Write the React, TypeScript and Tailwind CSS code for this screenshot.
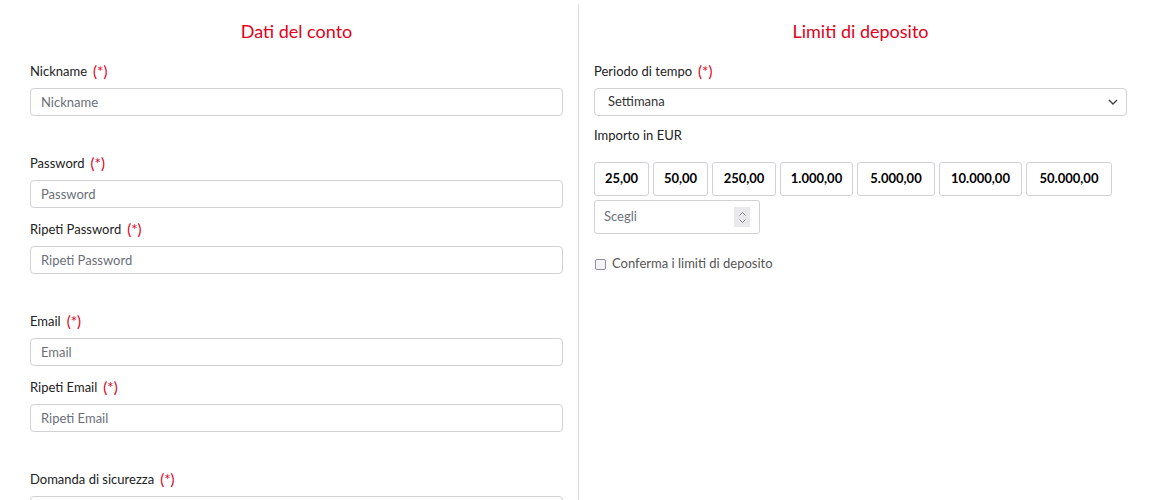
import React from 'react';

const amounts = [
  { v: '25,00', w: 'w-[55px]' },
  { v: '50,00', w: 'w-[55px]' },
  { v: '250,00', w: 'w-[64px]' },
  { v: '1.000,00', w: 'w-[73px]' },
  { v: '5.000,00', w: 'w-[78px]' },
  { v: '10.000,00', w: 'w-[83px]' },
  { v: '50.000,00', w: 'w-[86px]' },
];

function Req() {
  return <span className="ml-[6px] text-[15px] text-[#e2001a]">(*)</span>;
}

function Field({ label, placeholder, gap }: { label: string; placeholder: string; gap: string }) {
  return (
    <div className={gap}>
      <label className="flex h-5 items-center leading-5 text-[13px] text-[#222] mb-[7px]">
        {label}
        <Req />
      </label>
      <input
        placeholder={placeholder}
        className="block h-[28px] w-full rounded-[4px] border border-[#d2d2d6] px-[10px] text-[13px] text-[#333] placeholder:text-[#6b6f78] outline-none"
      />
    </div>
  );
}

export default function App() {
  return (
    <div className="flex min-h-[500px] bg-white pt-1 font-['Lato',sans-serif]">
      {/* Left: account data */}
      <div className="w-[579px] shrink-0 border-r border-[#dcdcdc] pl-[30px] pr-[15px]">
        <h2 className="mt-[15px] mb-[18px] h-6 text-center text-[18px] leading-6 text-[#e2001a]">Dati del conto</h2>
        <Field label="Nickname" placeholder="Nickname" gap="mb-[37px]" />
        <Field label="Password" placeholder="Password" gap="mb-[11px]" />
        <Field label="Ripeti Password" placeholder="Ripeti Password" gap="mb-[37px]" />
        <Field label="Email" placeholder="Email" gap="mb-[11px]" />
        <Field label="Ripeti Email" placeholder="Ripeti Email" gap="mb-[37px]" />
        <Field label="Domanda di sicurezza" placeholder="" gap="mb-0" />
      </div>

      {/* Right: deposit limits */}
      <div className="flex-1 pl-[15px] pr-[36px]">
        <h2 className="mt-[15px] mb-[18px] h-6 text-center text-[18px] leading-6 text-[#e2001a]">Limiti di deposito</h2>
        <label className="flex h-5 items-center leading-5 text-[13px] text-[#222] mb-[7px]">
          Periodo di tempo
          <Req />
        </label>
        <div className="flex h-[28px] items-center justify-between rounded-[4px] border border-[#d2d2d6] pl-[13px] pr-[8px] text-[13px] text-[#333]">
          <span>Settimana</span>
          <svg width="10" height="6" viewBox="0 0 10 6" fill="none" stroke="#444" strokeWidth="1.4">
            <path d="M1 1l4 4 4-4" />
          </svg>
        </div>
        <div className="mt-[9px] mb-[17px] h-5 leading-5 text-[13px] text-[#222]">Importo in EUR</div>
        <div className="flex flex-wrap gap-x-[4px] gap-y-[4px]">
          {amounts.map((a) => (
            <button
              key={a.v}
              className={`${a.w} h-[34px] rounded-[3px] border border-[#d2d2d6] text-center text-[13px] font-bold text-black`}
            >
              {a.v}
            </button>
          ))}
        </div>
        <div className="mt-[4px] flex h-[34px] w-[166px] items-center justify-between rounded-[3px] border border-[#d2d2d6] pl-[9px] pr-[9px]">
          <span className="text-[13px] text-[#6b6f78]">Scegli</span>
          <div className="flex h-[20px] w-[16px] flex-col items-center justify-center gap-[3px] bg-[#e9e9ed]">
            <svg width="7" height="4" viewBox="0 0 7 4" fill="none" stroke="#888" strokeWidth="1">
              <path d="M0.5 3.5l3-3 3 3" />
            </svg>
            <svg width="7" height="4" viewBox="0 0 7 4" fill="none" stroke="#888" strokeWidth="1">
              <path d="M0.5 0.5l3 3 3-3" />
            </svg>
          </div>
        </div>
        <label className="mt-[20px] flex h-5 items-center gap-[6px] text-[13px] text-[#555]">
          <span className="ml-[1px] inline-block h-[11px] w-[11px] rounded-[2px] border border-[#8f8f9d] bg-[#f4f4f6]" />
          Conferma i limiti di deposito
        </label>
      </div>
    </div>
  );
}
